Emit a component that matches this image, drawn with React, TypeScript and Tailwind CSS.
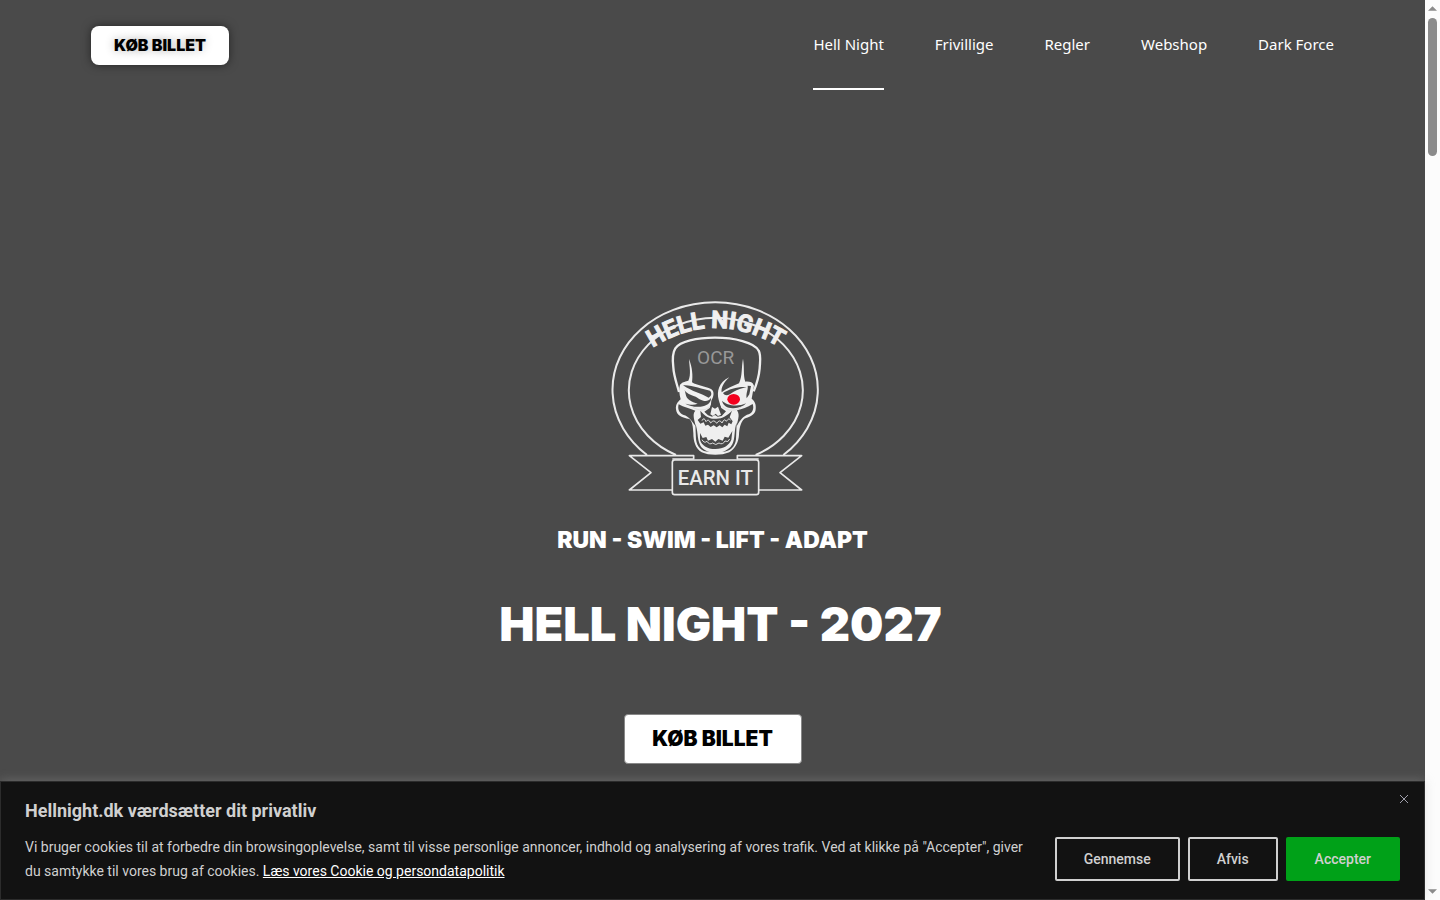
import React from 'react';

interface NavItem {
    label: string;
    href: string;
    active?: boolean;
}

const NAV_ITEMS: NavItem[] = [
    { label: 'Hell Night', href: '#hell-night', active: true },
    { label: 'Frivillige', href: '#frivillige' },
    { label: 'Regler', href: '#regler' },
    { label: 'Webshop', href: '#webshop' },
    { label: 'Dark Force', href: '#dark-force' },
];

const HellNightLogo: React.FC = () => (
    <svg viewBox="0 0 690 660" className="w-[230px] h-[220px] ml-1" role="img" aria-label="Hell Night OCR - Earn it">
        {/* rings, open at the bottom where the ribbon sits */}
        <g fill="none" stroke="#e9e9e9" strokeWidth="6">
            <path d="M141 495A308 262 0 1 1 550 495" />
            <path d="M228 495A261 218 0 1 1 467 495" />
        </g>

        <path id="logo-arc" d="M140 186C270 90 420 90 556 184" fill="none" />
        <text fill="#f0f0f0" stroke="#f0f0f0" strokeWidth="3" fontFamily="Roboto, sans-serif" fontWeight="700" fontSize="72">
            <textPath href="#logo-arc" startOffset="50%" textAnchor="middle">HELL NIGHT</textPath>
        </text>

        {/* cranium */}
        <path d="M237 306C230 280 221 256 220 232C217 208 217 189 226 175C240 154 290 143 345 143C402 143 464 157 476 182C484 196 480 214 479 235C477 258 470 282 461 304" fill="none" stroke="#eee" strokeWidth="7" />
        <text x="347" y="222" textAnchor="middle" fill="#989898" fontFamily="Roboto, sans-serif" fontWeight="400" fontSize="57">OCR</text>

        {/* face */}
        <path d="M240 284C249 274 258 275 265 272C274 254 268 229 267 207C277 232 279 258 276 277C292 287 315 289 333 297C345 305 341 319 334 332L332 352L342 347L355 347L363 353L356 329C350 307 355 277 388 262C370 278 363 294 365 307C380 295 399 288 417 280C428 257 424 231 429 206C434 235 429 254 436 275C448 274 458 276 462 287L455 326C468 336 469 350 466 364C461 377 447 382 433 386C421 398 418 415 417 434C416 456 406 475 388 487C364 497 327 497 305 487C286 476 280 454 280 430C279 409 277 394 268 387C247 384 229 376 228 358C226 346 232 336 242 328C238 312 236 297 240 284Z" fill="#efefef" />
        <g fill="#4a4a4a">
            <path d="M249 286C276 284 307 298 330 302C337 310 334 318 326 323C304 311 278 305 249 286Z" />
            <path d="M254 300C257 308 270 315 287 320C298 326 302 332 318 333C327 332 331 327 333 323C334 336 324 345 309 349C291 353 269 349 256 341C266 343 280 347 293 341C275 337 259 328 257 313Z" />
            <path d="M369 309C387 297 414 289 440 291C425 296 412 298 401 305C388 314 377 321 369 309Z" />
            <path d="M366 332C378 344 410 353 438 340C430 350 410 357 392 354C377 352 368 343 366 332Z" />
            <path d="M443 287L453 288L448 313L440 325C437 310 445 299 443 287Z" />
            <path d="M236 343C251 351 272 357 286 362C275 372 285 394 287 409C273 389 266 379 251 375C237 370 232 357 236 343Z" />
            <path d="M458 342C442 353 426 357 411 361C422 377 411 394 410 409C422 388 432 377 446 373C460 367 462 353 458 342Z" />
            <path d="M336 337L346 344L356 337L364 354L378 364L365 378L353 380L345 375L336 380L324 376L313 365L329 354Z" />
            <path d="M301 362C317 382 332 387 347 386C366 387 382 376 396 362L389 382L398 394L394 403L386 398L382 409L374 404L367 412L359 406L350 412L341 406L332 411L324 404L316 407L311 397L301 401L293 390L303 381Z" />
            <path d="M300 429L308 444L319 441L324 452L336 447L346 455L355 447L368 452L374 440L385 443L397 423L394 449C387 466 372 476 346 477C321 477 304 465 300 449Z" />
            <path d="M286 402C294 418 291 446 300 464C305 477 318 482 328 486C303 485 291 471 288 448Z" />
            <path d="M410 398C402 418 406 445 397 463C391 475 379 482 367 486C391 484 405 471 408 448Z" />
        </g>
        <path d="M336 351L345 356L354 350L363 374L354 378L347 371L339 378L331 373Z" fill="#efefef" />
        <g fill="none" stroke="#dedede" strokeWidth="3">
            <path d="M278 351C294 363 318 363 328 350M367 350C386 364 408 364 424 351" />
            <path d="M306 392Q312 379 318 395Q325 384 332 399Q342 386 350 400Q359 386 366 399Q373 383 379 394Q388 381 391 391" />
            <path d="M306 449Q312 461 321 454Q328 466 338 459Q347 468 357 459Q368 466 375 453Q385 459 389 447" />
        </g>
        <ellipse cx="401" cy="328" rx="19" ry="16" fill="#f3001d" />

        {/* ribbon */}
        <g fill="none" stroke="#e9e9e9" strokeWidth="5" strokeLinejoin="round">
            <path d="M217 600H88L153 548L88 497H281V507H217" />
            <path d="M476 600H605L540 548L605 497H412V507H476" />
            <rect x="217" y="510" width="259" height="104" rx="7" />
        </g>
        <text x="346" y="584" textAnchor="middle" fill="#e9e9e9" fontFamily="Roboto, sans-serif" fontWeight="500" fontSize="61">EARN IT</text>
    </svg>
);

const Header: React.FC = () => (
    <header className="flex h-[90px] items-center justify-between px-[91px]">
        <button className="h-[39px] min-w-[138px] rounded-lg bg-white text-base font-black text-black shadow-[0_0_10px_rgba(0,0,0,0.5)] [text-shadow:0_0_10px_rgba(0,0,0,0.3)]">
            KØB BILLET
        </button>
        <nav className="flex h-full gap-[51px] font-['Noto_Sans',sans-serif] text-[15px] text-white">
            {NAV_ITEMS.map(item => (
                <a
                    key={item.label}
                    href={item.href}
                    className={item.active ? 'flex items-center border-b-2 border-white' : 'flex items-center border-b-2 border-transparent'}
                >
                    {item.label}
                </a>
            ))}
        </nav>
    </header>
);

const Hero: React.FC = () => (
    <main className="flex flex-1 flex-col items-center text-white">
        <div className="mt-[200px]">
            <HellNightLogo />
        </div>
        <h2 className="mt-[13px] text-[23px] leading-[34px] font-black">RUN - SWIM - LIFT - ADAPT</h2>
        <h1 className="mt-[37px] pl-4 text-[47px] leading-[60px] font-black">HELL NIGHT - 2027</h1>
        <button className="mt-[60px] mb-4 h-[50px] min-w-[178px] rounded border border-[#888888] bg-white text-[21px] font-black text-black">
            KØB BILLET
        </button>
    </main>
);

const CookieBanner: React.FC = () => (
    <section
        aria-label="Cookies"
        className="relative border border-[#2c2c2c] bg-[#121212] px-6 py-4 font-[Roboto,sans-serif] text-[#d0d0d0] shadow-[0_-1px_10px_rgba(172,171,171,0.3)]"
    >
        <button aria-label="Luk" className="absolute top-3 right-[15px]">
            <svg viewBox="0 0 10 10" className="size-[10px]" stroke="#a0a0ac" strokeWidth="1" fill="none">
                <path d="M1 1L9 9M9 1L1 9" />
            </svg>
        </button>
        <h3 className="text-lg leading-[26px] font-bold">Hellnight.dk værdsætter dit privatliv</h3>
        <div className="mt-[11px] flex items-center gap-6">
            <p className="flex-1 text-sm leading-6">
                Vi bruger cookies til at forbedre din browsingoplevelse, samt til visse personlige annoncer, indhold og analysering af vores trafik. Ved at klikke på "Accepter", giver du samtykke til vores brug af cookies.{' '}
                <a href="#cookiepolitik" className="text-white underline">Læs vores Cookie og persondatapolitik</a>
            </p>
            <div className="flex gap-2 text-sm font-medium">
                <button className="h-11 rounded-xs border-2 border-[#d0d0d0] px-[27px]">Gennemse</button>
                <button className="h-11 rounded-xs border-2 border-[#d0d0d0] px-[27px]">Afvis</button>
                <button className="h-11 rounded-xs border-2 border-[#00a118] bg-[#00a118] px-[27px]">Accepter</button>
            </div>
        </div>
    </section>
);

const ScrollTrack: React.FC = () => (
    <div aria-hidden="true" className="flex w-[15px] shrink-0 flex-col items-center bg-[#fcfcfc] py-[6px]">
        <svg viewBox="0 0 10 5" className="h-[5px] w-[9px]" fill="#8b8b8b"><path d="M0 5L5 0L10 5Z" /></svg>
        <div className="mt-[7px] h-[138px] w-[9px] rounded-full bg-[#8b8b8b]" />
        <svg viewBox="0 0 10 5" className="mt-auto h-[5px] w-[9px]" fill="#8b8b8b"><path d="M0 0L5 5L10 0Z" /></svg>
    </div>
);

const App: React.FC = () => {
    return (
        <div className="flex min-h-screen bg-[#4a4a4a] font-[Inter,sans-serif]">
            <div className="flex min-w-0 flex-1 flex-col">
                <Header />
                <Hero />
                <CookieBanner />
            </div>
            <ScrollTrack />
        </div>
    );
};

export default App;
